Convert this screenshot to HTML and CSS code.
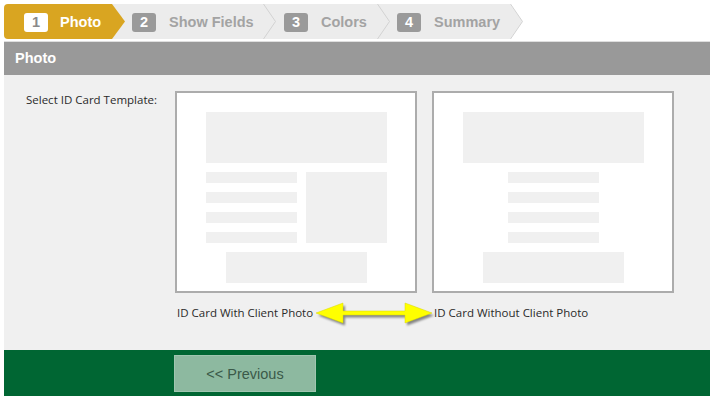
FILE: index.html
```html
<!DOCTYPE html>
<html>
<head>
<meta charset="utf-8">
<link rel="stylesheet" href="styles.css">
</head>
<body>
<nav class="steps">
  <div class="step step-1 active"><span class="num">1</span><span class="name">Photo</span></div>
  <svg class="sep" width="13" height="35" viewBox="0 0 13 35"><rect width="13" height="35" fill="#ececec"/><polygon points="0,0 13,17.5 0,35" fill="#d9a521"/></svg>
  <div class="step step-2"><span class="num">2</span><span class="name">Show Fields</span></div>
  <svg class="sep" width="13" height="35" viewBox="0 0 13 35"><rect width="13" height="35" fill="#ececec"/><polyline points="0.5,0 12.5,17.5 0.5,35" fill="none" stroke="#d2d2d2" stroke-width="1"/></svg>
  <div class="step step-3"><span class="num">3</span><span class="name">Colors</span></div>
  <svg class="sep" width="13" height="35" viewBox="0 0 13 35"><rect width="13" height="35" fill="#ececec"/><polyline points="0.5,0 12.5,17.5 0.5,35" fill="none" stroke="#d2d2d2" stroke-width="1"/></svg>
  <div class="step step-4"><span class="num">4</span><span class="name">Summary</span></div>
  <svg class="sep" width="13" height="35" viewBox="0 0 13 35"><rect width="13" height="35" fill="#ffffff"/><polygon points="0,0 12.5,17.5 0,35" fill="#ececec"/><polyline points="0.5,0 12.5,17.5 0.5,35" fill="none" stroke="#d2d2d2" stroke-width="1"/></svg>
</nav>

<main class="panel">
  <header class="panel-head">Photo</header>
  <section class="panel-body">
    <div class="field-label">Select ID Card Template:</div>
    <div class="templates">
      <div class="template">
        <div class="card">
          <div class="blk blk-top"></div>
          <div class="mid">
            <div class="lines">
              <div class="line"></div><div class="line"></div><div class="line"></div><div class="line"></div>
            </div>
            <div class="blk blk-photo"></div>
          </div>
          <div class="blk blk-bottom"></div>
        </div>
        <div class="caption">ID Card With Client Photo</div>
      </div>
      <div class="template">
        <div class="card">
          <div class="blk blk-top"></div>
          <div class="mid">
            <div class="lines">
              <div class="line"></div><div class="line"></div><div class="line"></div><div class="line"></div>
            </div>
          </div>
          <div class="blk blk-bottom"></div>
        </div>
        <div class="caption">ID Card Without Client Photo</div>
      </div>
      <svg class="dbl-arrow" width="122" height="28" viewBox="0 0 122 28">
        <defs><filter id="sh" x="-10%" y="-30%" width="120%" height="160%"><feGaussianBlur stdDeviation="1.2"/></filter></defs>
        <polygon points="1,12 28,2 28,10 90,10 90,2 117,12 90,22 90,14 28,14 28,22" fill="rgba(0,0,0,0.45)" transform="translate(2,2.5)" filter="url(#sh)"/>
        <polygon points="1,12 28,2 28,10 90,10 90,2 117,12 90,22 90,14 28,14 28,22" fill="#ffff00" stroke="#d8d800" stroke-width="0.5"/>
      </svg>
    </div>
  </section>
  <footer class="panel-foot">
    <button class="btn-prev" type="button">&lt;&lt; Previous</button>
  </footer>
</main>
</body>
</html>
```

FILE: styles.css
```css
html, body {
  margin: 0;
  padding: 0;
  background: #ffffff;
  overflow: hidden;
}
body {
  font-family: "Liberation Sans", Arial, sans-serif;
}

/* ---- steps ---- */
.steps {
  display: flex;
  height: 35px;
  margin: 4px 0 0 4px;
}
.step {
  display: flex;
  align-items: center;
  height: 35px;
  box-sizing: border-box;
  background: #ececec;
  font-size: 14.5px;
  font-weight: bold;
  color: #a3a3a3;
}
.step .num {
  display: inline-flex;
  align-items: center;
  justify-content: center;
  width: 24px;
  height: 19px;
  border-radius: 3px;
  background: #9a9a9a;
  color: #ffffff;
  margin-right: 13px;
  margin-top: 1px;
}
.step.active {
  background: #d9a521;
  color: #ffffff;
  border-radius: 4px 0 0 4px;
}
.step.active .num {
  background: #ffffff;
  color: #8a8a8a;
  margin-right: 12px;
}
.step-1 { width: 108px; padding-left: 20px; }
.step-2 { width: 138px; padding-left: 7px; }
.step-3 { width: 101px; padding-left: 8px; }
.step-4 { width: 120px; padding-left: 7px; }
.sep { display: block; flex: none; }

/* ---- panel ---- */
.panel {
  margin: 2px 0 0 4px;
}
.panel-head {
  border-top: 1px solid #dedede;
  height: 33px;
  background: #999999;
  color: #ffffff;
  font-size: 14.5px;
  font-weight: bold;
  line-height: 33px;
  padding-left: 11px;
}
.panel-body {
  display: flex;
  background: #f0f0f0;
  height: 275px;
  box-sizing: border-box;
  padding: 16px 0 0 22px;
  font-family: "Open Sans", "Noto Sans", sans-serif;
  font-size: 11.5px;
  color: #2a2a2a;
}
.field-label {
  width: 149px;
  flex: none;
  line-height: 16px;
  padding-top: 1px;
  white-space: nowrap;
}
.templates {
  position: relative;
  display: flex;
  gap: 15px;
  align-items: flex-start;
}
.template {
  display: flex;
  flex-direction: column;
}
.card {
  width: 242px;
  height: 202px;
  box-sizing: border-box;
  border: 2px solid #acacac;
  background: #ffffff;
  display: flex;
  flex-direction: column;
  align-items: center;
  padding-top: 19px;
}
.blk, .line { background: #f0f0f0; }
.blk-top { width: 181px; height: 51px; }
.mid {
  display: flex;
  gap: 9px;
  margin-top: 9px;
  height: 71px;
}
.lines {
  display: flex;
  flex-direction: column;
  gap: 9px;
}
.line { width: 91px; height: 11px; }
.blk-photo { width: 81px; height: 71px; }
.blk-bottom { width: 141px; height: 31px; margin-top: 9px; }
.caption {
  margin-top: 12px;
  padding-left: 2px;
  line-height: 16px;
  white-space: nowrap;
}
.dbl-arrow {
  position: absolute;
  left: 140px;
  top: 210px;
}

/* ---- footer ---- */
.panel-foot {
  background: #006633;
  height: 60px;
  padding: 5px 0 0 170px;
  box-sizing: border-box;
}
.btn-prev {
  width: 142px;
  height: 37px;
  background: #8db9a0;
  border: 1px solid #9fc6b0;
  color: #3b5a49;
  font-family: "Liberation Sans", Arial, sans-serif;
  font-size: 14.5px;
  padding: 0;
  margin: 0;
}
```
